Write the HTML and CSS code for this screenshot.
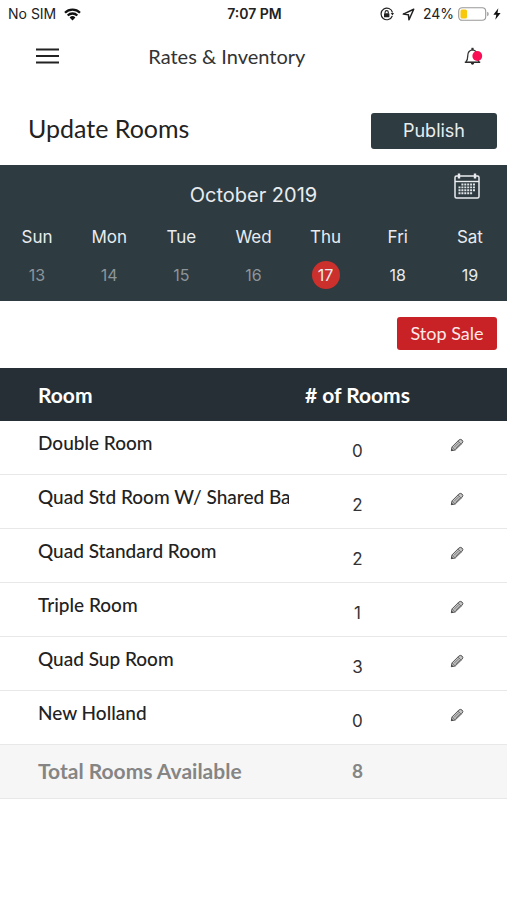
FILE: index.html
```html
<!DOCTYPE html>
<html lang="en">
<head>
<meta charset="utf-8">
<meta name="viewport" content="width=device-width, initial-scale=1">
<title>Rates &amp; Inventory</title>
<link rel="stylesheet" href="styles.css">
</head>
<body>
<svg class="sprite" aria-hidden="true">
  <symbol id="pencil" viewBox="0 0 14 14">
    <path d="M1.3 12.7 2 8.9 8.8 2.1Q10.300 .7 12 2t.1 3.300L5.200 12Z" fill="#c4c4c4" stroke="#555" stroke-width="1" stroke-linejoin="round"/>
    <path d="M2 8.900 5.200 12M7.900 3l3.300 3.200M4 9.400 9 4.400M5.400 10.500l4.800-4.800" fill="none" stroke="#666" stroke-width=".8"/>
    <path d="m1.100 12.900.5-2.300 1.700 1.700Z" fill="#444"/>
  </symbol>
</svg>

<div class="status">
  <div class="status-side">
    <span>No SIM</span>
    <svg width="17" height="13" viewBox="0 0 17 13" aria-hidden="true">
      <g fill="none" stroke="#111" stroke-width="2.300">
        <path d="M1 4.700a10.700 10.700 0 0 1 15 0"/>
        <path d="M3.700 7.500a6.800 6.800 0 0 1 9.600 0"/>
      </g>
      <path d="M8.500 12.400 5.600 9.500a4.100 4.100 0 0 1 5.800 0Z" fill="#111"/>
    </svg>
  </div>
  <span class="clock">7:07 PM</span>
  <div class="status-side status-right">
    <svg class="lock" width="14" height="14" viewBox="0 0 14 14" aria-hidden="true">
      <path d="M12.500 5.500A5.800 5.800 0 1 0 12.300 9" fill="none" stroke="#222" stroke-width="1.200"/>
      <path d="m10.700 6 3.300 0-1.500 2.600Z" fill="#222"/>
      <rect x="4" y="6.200" width="5.400" height="4.100" rx=".6" fill="#222"/>
      <path d="M5.100 6.400V5.200a1.600 1.600 0 0 1 3.200 0v1.200" fill="none" stroke="#222" stroke-width="1.100"/>
    </svg>
    <svg class="arrow" width="13" height="13" viewBox="0 0 13 13" aria-hidden="true">
      <path d="M11.700 1.300 1.300 6.100l5.100.6.600 5.100Z" fill="none" stroke="#222" stroke-width="1.500" stroke-linejoin="round"/>
    </svg>
    <span>24%</span>
    <svg class="battery" width="31" height="14" viewBox="0 0 31 14" aria-hidden="true">
      <rect x=".7" y=".7" width="27" height="12.600" rx="3.500" fill="#fff" stroke="#999" stroke-width="1.100"/>
      <rect x="2.500" y="2.500" width="6.500" height="9" rx="1.500" fill="#f7c80c"/>
      <path d="M29.200 4.700q1.500.6 1.500 2.300t-1.500 2.300Z" fill="#999"/>
    </svg>
    <svg width="8" height="12" viewBox="0 0 8 12" aria-hidden="true">
      <path d="M5.300.300.400 6.700h2.900l-1 5L7.600 5H4.500Z" fill="#111"/>
    </svg>
  </div>
</div>

<header class="appbar">
  <button class="icon-button" aria-label="Menu">
    <svg width="23" height="16" viewBox="0 0 23 16"><path d="M0 1.500h23M0 8h23M0 14.500h23" stroke="#222" stroke-width="2.200"/></svg>
  </button>
  <h1>Rates &amp; Inventory</h1>
  <button class="icon-button" aria-label="Notifications">
    <svg width="22" height="20" viewBox="0 0 22 20">
      <path d="M3 15.800c1.500-1.400 1.700-2.800 1.700-5.600 0-3.700 1.900-6 4.800-6.300 2.900.300 4.800 2.600 4.800 6.300 0 2.800.2 4.200 1.700 5.600" fill="none" stroke="#333" stroke-width="1.300"/>
      <path d="M1.800 16.200h15.400" stroke="#222" stroke-width="1.500"/>
      <path d="M9.500 4V1.800" stroke="#333" stroke-width="2.200"/>
      <path d="M7.800 17h3.400q-.3 1.700-1.700 1.700T7.800 17Z" fill="#222"/>
      <circle cx="14.300" cy="10" r="4.900" fill="#fa0f55"/>
    </svg>
  </button>
</header>

<main>
  <div class="heading">
    <h2>Update Rooms</h2>
    <button class="publish">Publish</button>
  </div>

  <section class="calendar">
    <div class="month">
      <span class="month-name">October 2019</span>
      <button class="icon-button" aria-label="Choose date">
        <svg width="26" height="26" viewBox="0 0 26 26">
          <rect x="1" y="3" width="24" height="22" rx="1.500" fill="none" stroke="#e9edef" stroke-width="1.500"/>
          <path d="M1 8.500h24" stroke="#e9edef" stroke-width="1.400"/>
          <path d="M5 .5v5M21 .5v5" stroke="#e9edef" stroke-width="2.400"/>
          <g stroke="#dfe4e6" stroke-width="1.900" stroke-dasharray="2 .9">
            <path d="M7.400 11.500h14.500M4.500 14.400h17.400M4.500 17.300h17.400M4.500 20.200h14.500"/>
          </g>
        </svg>
      </button>
    </div>
    <div class="week names">
      <span>Sun</span><span>Mon</span><span>Tue</span><span>Wed</span><span>Thu</span><span>Fri</span><span>Sat</span>
    </div>
    <div class="week days">
      <button disabled>13</button><button disabled>14</button><button disabled>15</button><button disabled>16</button><button class="selected">17</button><button>18</button><button>19</button>
    </div>
  </section>

  <div class="actions"><button class="stop">Stop Sale</button></div>

  <table>
    <colgroup><col class="col-room"><col class="col-count"><col></colgroup>
    <thead>
      <tr><th scope="col" class="room">Room</th><th scope="col"># of Rooms</th><td></td></tr>
    </thead>
    <tbody>
      <tr><td class="room">Double Room</td><td class="count">0</td><td class="edit"><button class="icon-button" aria-label="Edit Double Room"><svg width="14" height="14"><use href="#pencil"/></svg></button></td></tr>
      <tr><td class="room">Quad Std Room W/ Shared Ba</td><td class="count">2</td><td class="edit"><button class="icon-button" aria-label="Edit Quad Std Room"><svg width="14" height="14"><use href="#pencil"/></svg></button></td></tr>
      <tr><td class="room">Quad Standard Room</td><td class="count">2</td><td class="edit"><button class="icon-button" aria-label="Edit Quad Standard Room"><svg width="14" height="14"><use href="#pencil"/></svg></button></td></tr>
      <tr><td class="room">Triple Room</td><td class="count">1</td><td class="edit"><button class="icon-button" aria-label="Edit Triple Room"><svg width="14" height="14"><use href="#pencil"/></svg></button></td></tr>
      <tr><td class="room">Quad Sup Room</td><td class="count">3</td><td class="edit"><button class="icon-button" aria-label="Edit Quad Sup Room"><svg width="14" height="14"><use href="#pencil"/></svg></button></td></tr>
      <tr><td class="room">New Holland</td><td class="count">0</td><td class="edit"><button class="icon-button" aria-label="Edit New Holland"><svg width="14" height="14"><use href="#pencil"/></svg></button></td></tr>
    </tbody>
    <tfoot>
      <tr><th scope="row" class="room">Total Rooms Available</th><td class="total">8</td><td></td></tr>
    </tfoot>
  </table>
</main>
</body>
</html>
```

FILE: styles.css
```css
* { box-sizing: border-box; }

body {
  margin: 0;
  background: #fff;
  color: #222;
  font-family: Lato, "Open Sans", sans-serif;
}

button {
  margin: 0;
  padding: 0;
  border: 0;
  background: none;
  color: inherit;
  font: inherit;
}

h1, h2 { margin: 0; font-weight: 400; }

svg { display: block; flex: none; }

.sprite { position: absolute; width: 0; height: 0; }

.status {
  display: grid;
  grid-template-columns: 1fr auto 1fr;
  align-items: center;
  height: 28px;
  padding: 0 6px 0 8px;
  font: 14px/20px Inter, sans-serif;
  white-space: nowrap;
}

.status-side { display: flex; align-items: center; gap: 8px; }
.status-right { justify-content: flex-end; gap: 4px; }
.lock, .arrow { margin-right: 4px; }
.clock { font-weight: 600; }

.appbar {
  display: grid;
  grid-template-columns: 5fr auto 8fr;
  align-items: center;
  height: 56px;
  padding: 0 22px 0 36px;
}

.appbar h1 { font-size: 20px; line-height: 24px; color: #333; }
.appbar .icon-button:last-child { justify-self: end; }
.icon-button { justify-self: start; }

.heading {
  display: flex;
  align-items: center;
  justify-content: space-between;
  height: 81px;
  padding: 12px 10px 0 28px;
}

.heading h2 { font-size: 25px; line-height: 30px; margin-bottom: 6px; }

.publish {
  width: 126px;
  height: 36px;
  border-radius: 3px;
  background: #2e3b41;
  color: #e8edf0;
  font: 18px/24px Inter, sans-serif;
}

.calendar {
  height: 136px;
  padding: 8px 1px 0;
  background: #2e3b41;
  color: #e8ecef;
  font-family: Inter, sans-serif;
}

.month {
  display: grid;
  grid-template-columns: 1fr auto 1fr;
  height: 52px;
  padding: 0 26px;
}

.month-name { grid-column: 2; padding-top: 10px; font-size: 20px; line-height: 24px; }
.month .icon-button { justify-self: end; align-self: start; }

.week {
  display: grid;
  grid-template-columns: repeat(7, 1fr);
  justify-items: center;
  align-items: center;
}

.names { height: 24px; font-size: 17px; }
.days { height: 28px; margin-top: 12px; font-size: 16px; }
.days button { width: 28px; height: 28px; border-radius: 50%; }
.days button:disabled { color: #8c959a; }
.days .selected { background: #cc302c; }

.actions { display: flex; justify-content: flex-end; padding: 16px 10px 18px; }

.stop {
  width: 100px;
  height: 33px;
  padding-bottom: 2px;
  border-radius: 3px;
  background: #c92226;
  color: #fbe9e9;
  font-size: 18px;
}

table {
  width: 100%;
  border-collapse: separate;
  border-spacing: 0;
  table-layout: fixed;
  font-size: 19px;
  line-height: 24px;
}

.col-room { width: 57%; }
.col-count { width: 27%; }

th, td { height: 54px; padding: 0; text-align: center; }

thead th, thead td { height: 53px; background: #272f36; color: #fff; }

th { font-size: 21px; font-weight: 700; }

.room {
  padding-left: 38px;
  overflow: hidden;
  text-align: left;
  white-space: nowrap;
}

tbody td, tfoot th, tfoot td { border-bottom: 1px solid #e8e8e8; }

tbody td { vertical-align: top; }
tbody .room { padding-top: 10px; font-weight: 500; }
.count { padding-top: 18px; color: #333; font: 17px/24px Inter, sans-serif; }
.edit { padding: 17px 18px 0 0; }
.edit .icon-button { display: inline-block; vertical-align: top; }

tfoot th, tfoot td { padding-bottom: 2px; background: #f6f6f6; color: #858585; }
tfoot .total { font-weight: 700; }
```
